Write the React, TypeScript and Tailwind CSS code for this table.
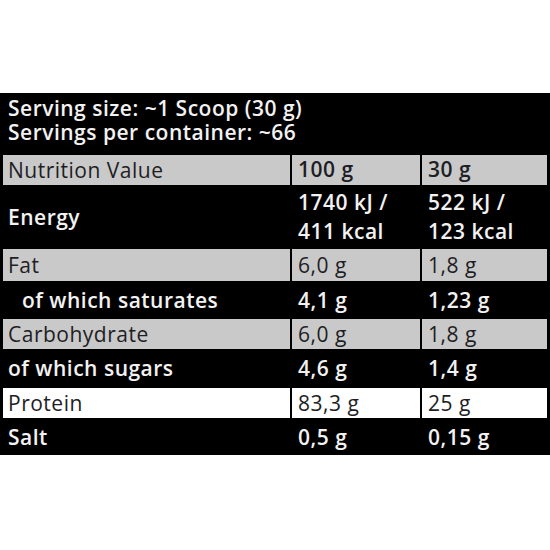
import React from "react";

type Row = {
  label: string;
  a: string[];
  b: string[];
  tone: "dark" | "gray" | "white";
  h: string;
  indent?: boolean;
};

const rows: Row[] = [
  { label: "Energy", a: ["1740 kJ /", "411 kcal"], b: ["522 kJ /", "123 kcal"], tone: "dark", h: "h-[60px]" },
  { label: "Fat", a: ["6,0 g"], b: ["1,8 g"], tone: "gray", h: "h-[32px]" },
  { label: "of which saturates", a: ["4,1 g"], b: ["1,23 g"], tone: "dark", h: "h-[34px]", indent: true },
  { label: "Carbohydrate", a: ["6,0 g"], b: ["1,8 g"], tone: "gray", h: "h-[30px]" },
  { label: "of which sugars", a: ["4,6 g"], b: ["1,4 g"], tone: "dark", h: "h-[35px]" },
  { label: "Protein", a: ["83,3 g"], b: ["25 g"], tone: "white", h: "h-[30px]" },
  { label: "Salt", a: ["0,5 g"], b: ["0,15 g"], tone: "dark", h: "h-[35px]" },
];

const toneClass = {
  dark: "bg-black text-[#f2f2f2] font-semibold",
  gray: "bg-[#c9c9c9] text-[#1e1e24]",
  white: "bg-white text-[#1e1e24]",
};

function Cell({ lines, tone, h, first, indent }: { lines: string[]; tone: Row["tone"]; h: string; first?: boolean; indent?: boolean }) {
  return (
    <div className={`${toneClass[tone]} ${h} flex flex-col justify-center leading-[29px] ${first ? (indent ? "pl-[19px]" : "pl-[5px]") : "pl-[6px]"}`}>
      {lines.map((l) => (
        <span key={l}>{l}</span>
      ))}
    </div>
  );
}

export default function App() {
  return (
    <div className="w-[550px] h-[550px] bg-white pt-[93px]" style={{ fontFamily: "'Open Sans', sans-serif" }}>
      <div className="bg-black px-[3px] pt-[3px] text-[21px] tracking-[0.5px]">
        <div className="px-[5px] text-[#f2f2f2] font-semibold leading-[24px] pb-[11px]">
          <div>Serving size: ~1 Scoop (30 g)</div>
          <div>Servings per container: ~66</div>
        </div>
        <div className="grid grid-cols-[287px_128px_125px] gap-[2px]">
          <Cell lines={["Nutrition Value"]} tone="gray" h="h-[30px]" first />
          <div className="bg-[#c9c9c9] h-[30px] flex items-center pl-[6px] font-semibold text-[#1e1e24]">100 g</div>
          <div className="bg-[#c9c9c9] h-[30px] flex items-center pl-[6px] font-semibold text-[#1e1e24]">30 g</div>
          {rows.map((r) => (
            <React.Fragment key={r.label}>
              <Cell lines={[r.label]} tone={r.tone} h={r.h} first indent={r.indent} />
              <Cell lines={r.a} tone={r.tone} h={r.h} />
              <Cell lines={r.b} tone={r.tone} h={r.h} />
            </React.Fragment>
          ))}
        </div>
      </div>
    </div>
  );
}
